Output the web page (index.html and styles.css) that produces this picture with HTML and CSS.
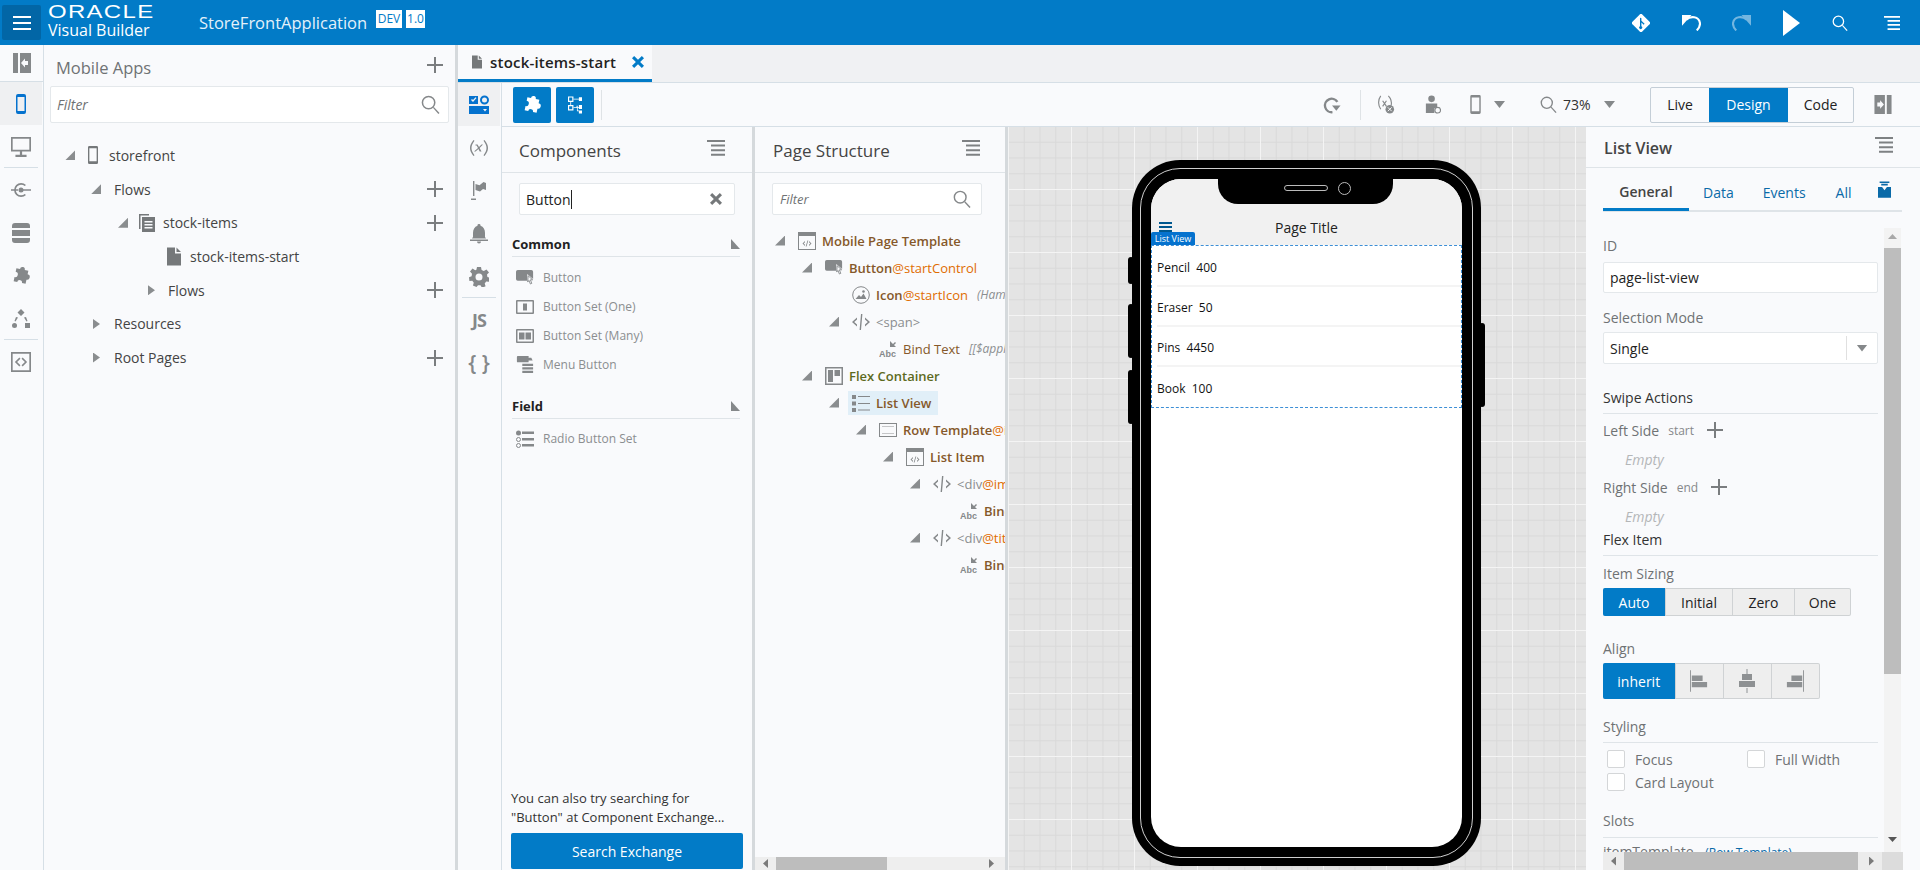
FILE: index.html
```html
<!DOCTYPE html>
<html lang="en">
<head>
  <meta charset="UTF-8" />
  <meta name="viewport" content="width=device-width, initial-scale=1" />
  <title>Oracle Visual Builder - StoreFrontApplication</title>
  <link rel="stylesheet" href="styles.css">
</head>
<body>
  <svg class="sprite" xmlns="http://www.w3.org/2000/svg">
    <symbol id="i-plus" viewBox="0 0 16 16"><path d="M7 0h2v7h7v2H9v7H7V9H0V7h7z"/></symbol>
    <symbol id="i-search" viewBox="0 0 20 20"><circle cx="8" cy="8" r="6.500" fill="none" stroke="currentColor" stroke-width="1.600"/><path d="M12.500 13.500l1-1 6 6.500-1.200 1z"/></symbol>
    <symbol id="i-list-menu" viewBox="0 0 18 16"><path d="M0 0h18v2H0zM4 4.600h14v2H4zM4 9.200h14v2H4zM4 13.800h14v2H4z"/></symbol>
    <symbol id="i-panel-l" viewBox="0 0 18 20"><path fill-rule="evenodd" d="M0 0h5v20H0zM7 0h11v20H7zM15 8h-3V5.500L8 10l4 4.500V12h3z"/></symbol>
    <symbol id="i-panel-r" viewBox="0 0 18 20"><path fill-rule="evenodd" d="M0 0h11v20H0zM3 8h3V5.500L10 10l-4 4.500V12H3zM13 0h5v20h-5z"/></symbol>
    <symbol id="i-mobile" viewBox="0 0 10 20"><path fill-rule="evenodd" d="M2 0h6a2 2 0 0 1 2 2v16a2 2 0 0 1-2 2H2a2 2 0 0 1-2-2V2a2 2 0 0 1 2-2zm-.5 3v14h7V3z"/></symbol>
    <symbol id="i-desktop" viewBox="0 0 18 18"><path fill-rule="evenodd" d="M0 0h18v13H0zm1.500 1.500v10h15v-10zM8 13h2v3H8zM4 16h10v2H4z"/></symbol>
    <symbol id="i-service" viewBox="0 0 20 20"><path d="M15 5a7 7 0 1 0 0 10l-1.300-1.100A5.300 5.300 0 1 1 13.700 6.100z"/><circle cx="10" cy="10" r="2.500"/><path d="M0 9.200h7v1.600H0zM12 9.200h8v1.600h-8z"/></symbol>
    <symbol id="i-db" viewBox="0 0 18 20"><path d="M3 0h12a3 3 0 0 1 3 3v2H0V3a3 3 0 0 1 3-3zM0 7h18v6H0zM0 15h18v2a3 3 0 0 1-3 3H3a3 3 0 0 1-3-3z"/></symbol>
    <symbol id="i-puzzle" viewBox="0 0 20 20"><path transform="rotate(12 10 10) translate(10 10) scale(1.220) translate(-10 -10)" d="M5 4.500h3a2 2 0 1 1 4 0h3v3a2 2 0 1 1 0 4.500v3.500h-3a2 2 0 1 0-4 0H5V12a2 2 0 1 0 0-4.500z"/></symbol>
    <symbol id="i-process" viewBox="0 0 18 20"><path d="M9 0l3.500 3.500L9 7 5.500 3.500zM4 8l2 .5-2.500 4-1-.6zM14 8l-2 .5 2.500 4 1-.6z"/><circle cx="2.500" cy="16.500" r="2.500"/><path d="M13 14h5v5h-5z"/></symbol>
    <symbol id="i-code-box" viewBox="0 0 18 18"><path fill-rule="evenodd" d="M0 0h18v18H0zm1.500 1.500v15h15v-15z"/><path d="M7.500 5L3.500 9l4 4 1-1-3-3 3-3zM10.500 5l4 4-4 4-1-1 3-3-3-3z"/></symbol>
    <symbol id="i-file" viewBox="0 0 14 18"><path d="M0 0h8v6h6v12H0zM9.500 0L14 4.500H9.500z"/></symbol>
    <symbol id="i-pages" viewBox="0 0 16 18"><path d="M0 0h10v1.500H1.500V15H0z"/><path fill-rule="evenodd" d="M3 3h13v15H3zm2.500 4v1.500h8V7zm0 3v1.500h8V10zm0 3v1.500h8V13z"/></symbol>
    <symbol id="i-palette" viewBox="0 0 20 20"><path fill-rule="evenodd" d="M0 1h9v8H0zm2 4l2 2 3.500-4-1-.8L4 5 3 4z"/><circle cx="15.500" cy="5" r="3.500" fill="none" stroke="currentColor" stroke-width="2"/><path fill-rule="evenodd" d="M0 11h20v8H0zm14 3l2 2.500 2-2.500z"/></symbol>
    <symbol id="i-vars" viewBox="0 0 20 20"><path d="M4.500 2C2 5 1 7.500 1 10s1 5 3.500 8l1-.7C3.500 14.500 2.500 12.500 2.500 10s1-4.500 3-7.300zM15.500 2l-1 .7c2 2.800 3 4.800 3 7.300s-1 4.500-3 7.300l1 .7c2.500-3 3.500-5.500 3.500-8s-1-5-3.500-8zM6.500 6.500h2l1.500 2.500 2.500-2.500H14L10.600 10l1.900 3.500h-1.800L9.500 11l-3 2.500H5L9 10 7.600 7.500h-1.100z"/></symbol>
    <symbol id="i-flag" viewBox="0 0 16 20"><path d="M2 0h1.400v15H2zM0 17.500h5V19H0zM4.500 3l4 1.200L12.500 1 15 2v7l-3-1-3 2.500L4.500 9z"/></symbol>
    <symbol id="i-bell" viewBox="0 0 18 20"><path d="M9 0a1.500 1.500 0 0 1 1.500 1.700C13.500 2.700 15 5.500 15 9v4l1 1.500H2L3 13V9c0-3.500 1.500-6.300 4.500-7.300A1.500 1.500 0 0 1 9 0zM0 15.500h18V17H0zM7 17.500h4a2 2 0 0 1-4 0z"/></symbol>
    <symbol id="i-gear" viewBox="0 0 20 20"><path fill-rule="evenodd" d="M8 0h4l.6 3 2.200 1 2.700-1.600 2.500 3-2 2.200.4 2.400 2.600 1-.9 3.800-2.900-.2-1.500 1.900.9 2.800-3.600 1.500-1.500-2.500h-2.500L7.500 20l-3.600-1.500.9-2.800-1.500-1.900-2.900.2L0 10.200l2.600-1L3 6.800 1 4.600l2.500-3L6.200 3.200 7.400 2.800zM10 6.500a3.500 3.500 0 1 0 0 7 3.500 3.500 0 0 0 0-7z"/></symbol>
    <symbol id="i-cursor-btn" viewBox="0 0 20 20"><path d="M2 1h15a2 2 0 0 1 2 2v8l-6.500-5.500V13H2a2 2 0 0 1-2-2V3a2 2 0 0 1 2-2z"/><path fill="none" stroke="currentColor" d="M13.500 7.500l5 4.500h-2.500l1.500 4-1.500.7-1.600-4-1.400 1.800z"/></symbol>
    <symbol id="i-btn-one" viewBox="0 0 18 14"><path fill-rule="evenodd" d="M1 0h16a1 1 0 0 1 1 1v12a1 1 0 0 1-1 1H1a1 1 0 0 1-1-1V1a1 1 0 0 1 1-1zm.5 1.500v11h15v-11z"/><path d="M7 3.500h4v7H7z"/></symbol>
    <symbol id="i-btn-many" viewBox="0 0 18 14"><path fill-rule="evenodd" d="M1 0h16a1 1 0 0 1 1 1v12a1 1 0 0 1-1 1H1a1 1 0 0 1-1-1V1a1 1 0 0 1 1-1zm.5 1.500v11h15v-11z"/><path d="M3 3.500h5.500v7H3zM9.500 3.500H15v7H9.500z"/></symbol>
    <symbol id="i-menu-btn" viewBox="0 0 18 20"><path d="M1 0h12v7H1a1 1 0 0 1-1-1V1a1 1 0 0 1 1-1zM13 2h3l1.500 3H13zM6 8.500h12V11H6zM6 12.500h12V15H6zM6 16.500h12V19H6z"/></symbol>
    <symbol id="i-radio" viewBox="0 0 18 18"><circle cx="2.500" cy="3" r="2.500"/><circle cx="2.500" cy="9.500" r="2" fill="none" stroke="currentColor"/><circle cx="2.500" cy="15.500" r="2" fill="none" stroke="currentColor"/><path d="M6 1.500h12v2.500H6zM6 8h12v2.500H6zM6 14h12v2.500H6z"/></symbol>
    <symbol id="i-template" viewBox="0 0 18 18"><path fill-rule="evenodd" d="M0 0h18v18H0zm1 4v13h16V4z"/><path d="M7 9l-2.500 2.500L7 14v-1.200L5.700 11.500 7 10.200zM11 9l2.500 2.500L11 14v-1.200l1.300-1.300L11 10.200zM9.500 8.500h.8l-1.800 6h-.8z"/></symbol>
    <symbol id="i-image" viewBox="0 0 18 18"><circle cx="9" cy="9" r="8.300" fill="none" stroke="currentColor" stroke-width="1"/><path d="M3.500 13l3.500-4 2 2 2.500-3.500 3 5.500z"/><circle cx="11.500" cy="5.500" r="1.300"/></symbol>
    <symbol id="i-tag" viewBox="0 0 18 18"><path d="M5 4.500L0 9l5 4.500v-2L2.200 9 5 6.500zM13 4.500L18 9l-5 4.500v-2L15.800 9 13 6.500zM9 1h1.400L9 17H7.600z"/></symbol>
    <symbol id="i-flex" viewBox="0 0 18 18"><path fill-rule="evenodd" d="M0 0h18v18H0zm1.500 1.500v15h15v-15z"/><path d="M3 3h5v12H3zM9.500 3h5.500v6H9.500z"/></symbol>
    <symbol id="i-listview" viewBox="0 0 18 18"><path d="M0 1h4v4H0zM0 7.500h4v4H0zM0 14h4v4H0zM6 2h12v1H6zM6 9h12v1H6zM6 15.500h12v1H6z"/></symbol>
    <symbol id="i-row" viewBox="0 0 18 14"><path fill-rule="evenodd" d="M0 0h18v14H0zm1 1v12h16V1z"/><path d="M3 3h12v.8H3zM3 10.200h12v.8H3z" opacity=".6"/></symbol>
    <symbol id="i-git" viewBox="0 0 18 18"><path fill-rule="evenodd" d="M7.500.7a2 2 0 0 1 3 0l6.800 6.800a2 2 0 0 1 0 3l-6.800 6.800a2 2 0 0 1-3 0L.7 10.500a2 2 0 0 1 0-3zM8 4.500v7.800a1.500 1.500 0 1 0 1.400 0V8.500l2.300 2.200.9-.9-3.200-3V4.500a.7.700 0 0 0-1.400 0z"/></symbol>
    <symbol id="i-undo" viewBox="0 0 18 16"><path d="M0 1h9L0 11z"/><path fill="none" stroke="currentColor" stroke-width="2" d="M4 5.500C8 1.500 16 2 17 8.500c.3 2.500-1.500 5.500-3 7"/></symbol>
    <symbol id="i-play" viewBox="0 0 17 26"><path d="M0 0l17 13L0 26z"/></symbol>
    <symbol id="i-refresh" viewBox="0 0 20 20"><path fill="none" stroke="currentColor" stroke-width="2.600" d="M16 6.500A7.500 7.500 0 1 0 10.500 18"/><path d="M10 10.500h9.500L14.800 16.500z"/></symbol>
    <symbol id="i-var-off" viewBox="0 0 20 20"><path fill="none" stroke="currentColor" stroke-width="1.200" d="M5 1C2 5 2 11 5 15M13 1c3 3 3.500 7 3 10M7 6l4 6M11 6l-4 6"/><circle cx="14.500" cy="15" r="4.500"/><path stroke="#f9fafc" d="M12.500 13l4 4M16.500 13l-4 4"/></symbol>
    <symbol id="i-user" viewBox="0 0 18 20"><circle cx="8" cy="4" r="3.500"/><path d="M2 9h12v4l-3 1v5H2z"/><circle cx="14.500" cy="16" r="3" fill="none" stroke="currentColor" stroke-width="1.200"/></symbol>
    <symbol id="i-device" viewBox="0 0 11 20"><path fill-rule="evenodd" d="M1.500 0h8A1.500 1.500 0 0 1 11 1.500v17A1.500 1.500 0 0 1 9.500 20h-8A1.500 1.500 0 0 1 0 18.500v-17A1.500 1.500 0 0 1 1.500 0zM1.500 2.500V17h8V2.500z"/></symbol>
    <symbol id="i-struct" viewBox="0 0 18 22"><path fill-rule="evenodd" d="M0 0h7v7H0zm1.500 1.500v4h4v-4zM0 11h7v7H0zm1.500 1.500v4h4v-4z"/><path d="M7 3h7V1h4v5h-4V4H7zM3 7h1v4H3zM7 14h4v-2h1.500v2H14v-3h4v5h-4v-1h-1.500v3H18v4h-4v-3h-2.500v-4H7z"/></symbol>
    <symbol id="i-pin" viewBox="0 0 16 20"><path d="M2 0h12v2H2zM4 3h8v2H4zM0 7h5l3 4 3-4h5v13H0z"/></symbol>
    <symbol id="i-close" viewBox="0 0 14 14"><path d="M2.500 0L7 4.500 11.500 0 14 2.500 9.500 7l4.500 4.500-2.500 2.500L7 9.500 2.500 14 0 11.500 4.500 7 0 2.500z"/></symbol>
    <symbol id="i-align-start" viewBox="0 0 20 24"><path d="M0 0h1v24H0zM2 6h12v6H2zM2 13h17v6H2z"/></symbol>
    <symbol id="i-align-center" viewBox="0 0 18 24"><path d="M8.500 0h1v5h-1zM4 5h10v6H4zM1 12h16v6H1zM8.500 19h1v5h-1z"/></symbol>
    <symbol id="i-align-end" viewBox="0 0 20 24"><path d="M19 0h1v24h-1zM6 6h12v6H6zM1 13h17v6H1z"/></symbol>
  </svg>

  <div class="app">
    <header class="topbar">
      <button class="menu-btn"><span></span><span></span><span></span></button>
      <div class="brand">
        <div class="brand-oracle">ORACLE</div>
        <div class="brand-product">Visual Builder</div>
      </div>
      <div class="app-name">StoreFrontApplication</div>
      <span class="badge badge-dev">DEV</span>
      <span class="badge badge-ver">1.0</span>
      <div class="top-actions">
        <svg class="ti"><use href="#i-git"/></svg>
        <svg class="ti ti-undo"><use href="#i-undo"/></svg>
        <svg class="ti ti-redo"><use href="#i-undo"/></svg>
        <svg class="ti ti-play"><use href="#i-play"/></svg>
        <svg class="ti ti-search"><use href="#i-search"/></svg>
        <svg class="ti ti-menu"><use href="#i-list-menu"/></svg>
      </div>
    </header>

    <div class="workspace">
      <nav class="rail">
        <div class="rail-top"><svg class="ri"><use href="#i-panel-l"/></svg></div>
        <div class="rail-item active"><svg class="ri ri-blue"><use href="#i-mobile"/></svg></div>
        <div class="rail-item sep"><svg class="ri"><use href="#i-desktop"/></svg></div>
        <div class="rail-item"><svg class="ri"><use href="#i-service"/></svg></div>
        <div class="rail-item"><svg class="ri"><use href="#i-db"/></svg></div>
        <div class="rail-item"><svg class="ri"><use href="#i-puzzle"/></svg></div>
        <div class="rail-item sep"><svg class="ri"><use href="#i-process"/></svg></div>
        <div class="rail-item"><svg class="ri"><use href="#i-code-box"/></svg></div>
      </nav>

      <section class="nav-panel">
        <div class="nav-head">
          <span>Mobile Apps</span>
          <svg class="plus"><use href="#i-plus"/></svg>
        </div>
        <div class="filter nav-filter">
          <span class="filter-text">Filter</span>
          <svg class="filter-icon"><use href="#i-search"/></svg>
        </div>
        <div class="nav-tree">
          <div class="nav-row n0"><i class="twist open"></i><svg class="ni ni-mobile"><use href="#i-device"/></svg>storefront</div>
          <div class="nav-row n1"><i class="twist open"></i>Flows<svg class="plus"><use href="#i-plus"/></svg></div>
          <div class="nav-row n2"><i class="twist open"></i><svg class="ni ni-pages"><use href="#i-pages"/></svg>stock-items<svg class="plus"><use href="#i-plus"/></svg></div>
          <div class="nav-row n3"><svg class="ni ni-file"><use href="#i-file"/></svg>stock-items-start</div>
          <div class="nav-row n4"><i class="twist shut"></i>Flows<svg class="plus"><use href="#i-plus"/></svg></div>
          <div class="nav-row n1"><i class="twist shut"></i>Resources</div>
          <div class="nav-row n1"><i class="twist shut"></i>Root Pages<svg class="plus"><use href="#i-plus"/></svg></div>
        </div>
      </section>

      <div class="editor">
        <div class="tabbar">
          <div class="tab">
            <svg class="tab-file"><use href="#i-file"/></svg>
            <span class="tab-name">stock-items-start</span>
            <svg class="tab-close"><use href="#i-close"/></svg>
          </div>
        </div>

        <div class="editor-body">
          <nav class="rail rail-tools">
            <div class="rail-item active"><svg class="ri ri-blue"><use href="#i-palette"/></svg></div>
            <div class="rail-item"><svg class="ri"><use href="#i-vars"/></svg></div>
            <div class="rail-item"><svg class="ri"><use href="#i-flag"/></svg></div>
            <div class="rail-item"><svg class="ri"><use href="#i-bell"/></svg></div>
            <div class="rail-item sep"><svg class="ri"><use href="#i-gear"/></svg></div>
            <div class="rail-item rail-glyph rail-js">JS</div>
            <div class="rail-item rail-glyph rail-braces">{ }</div>
          </nav>

          <div class="designer">
            <div class="toolbar">
              <button class="tool-btn"><svg><use href="#i-puzzle"/></svg></button>
              <button class="tool-btn"><svg class="tool-struct"><use href="#i-struct"/></svg></button>
              <span class="tool-div"></span>
              <div class="toolbar-right">
                <svg class="tb tb-refresh"><use href="#i-refresh"/></svg>
                <span class="tool-div tool-div-right"></span>
                <svg class="tb tb-var"><use href="#i-var-off"/></svg>
                <svg class="tb tb-user"><use href="#i-user"/></svg>
                <svg class="tb tb-device"><use href="#i-device"/></svg>
                <i class="caret tb-caret"></i>
                <svg class="tb tb-zoom"><use href="#i-search"/></svg>
                <span class="zoom-val">73%</span>
                <i class="caret zoom-caret"></i>
                <div class="modes">
                  <span class="mode mode-live">Live</span>
                  <span class="mode mode-design on">Design</span>
                  <span class="mode mode-code">Code</span>
                </div>
                <svg class="tb tb-panel"><use href="#i-panel-r"/></svg>
              </div>
            </div>

            <div class="designer-body">
              <section class="palette">
                <div class="panel-head">
                  <span>Components</span>
                  <svg class="panel-menu"><use href="#i-list-menu"/></svg>
                </div>
                <div class="filter palette-search">
                  <span class="search-value">Button</span>
                  <svg class="search-clear"><use href="#i-close"/></svg>
                </div>
                <div class="group group-first"><span>Common</span><i class="group-arrow"></i></div>
                <div class="comp"><svg class="ci"><use href="#i-cursor-btn"/></svg>Button</div>
                <div class="comp"><svg class="ci"><use href="#i-btn-one"/></svg>Button Set (One)</div>
                <div class="comp"><svg class="ci"><use href="#i-btn-many"/></svg>Button Set (Many)</div>
                <div class="comp"><svg class="ci"><use href="#i-menu-btn"/></svg>Menu Button</div>
                <div class="group group-second"><span>Field</span><i class="group-arrow"></i></div>
                <div class="comp"><svg class="ci"><use href="#i-radio"/></svg>Radio Button Set</div>
                <div class="palette-foot">
                  <p class="exchange-note">You can also try searching for<br>"Button" at Component Exchange...</p>
                  <button class="exchange-btn">Search Exchange</button>
                </div>
              </section>

              <section class="structure">
                <div class="panel-head">
                  <span>Page Structure</span>
                  <svg class="panel-menu"><use href="#i-list-menu"/></svg>
                </div>
                <div class="filter structure-filter">
                  <span class="filter-text">Filter</span>
                  <svg class="filter-icon"><use href="#i-search"/></svg>
                </div>
                <div class="st-tree">
                  <div class="st-row l0"><i class="twist open"></i><svg class="si"><use href="#i-template"/></svg><b>Mobile Page Template</b></div>
                  <div class="st-row l1"><i class="twist open"></i><svg class="si"><use href="#i-cursor-btn"/></svg><b>Button</b><em>@startControl</em></div>
                  <div class="st-row l2"><i class="twist none"></i><svg class="si"><use href="#i-image"/></svg><b>Icon</b><em>@startIcon</em><small>(Hamburger)</small></div>
                  <div class="st-row l2"><i class="twist open"></i><svg class="si"><use href="#i-tag"/></svg><span class="st-tag">&lt;span&gt;</span></div>
                  <div class="st-row l3"><i class="twist none"></i><svg class="si si-abc" viewBox="0 0 18 18"><path d="M11 1l3 3 2-2 1 1-2 2 2 2h-6z"/><text x="0" y="17" class="abc">Abc</text></svg><span class="st-plain">Bind Text</span><small>[[$application]]</small></div>
                  <div class="st-row l1"><i class="twist open"></i><svg class="si"><use href="#i-flex"/></svg><b class="olive">Flex Container</b></div>
                  <div class="st-row l2"><i class="twist open"></i><span class="st-selected"><svg class="si"><use href="#i-listview"/></svg><b>List View</b></span></div>
                  <div class="st-row l3"><i class="twist open"></i><svg class="si"><use href="#i-row"/></svg><b>Row Template</b><em>@itemTemplate</em></div>
                  <div class="st-row l4"><i class="twist open"></i><svg class="si"><use href="#i-template"/></svg><b>List Item</b></div>
                  <div class="st-row l5"><i class="twist open"></i><svg class="si"><use href="#i-tag"/></svg><span class="st-tag">&lt;div</span><em>@image</em></div>
                  <div class="st-row l6"><i class="twist none"></i><svg class="si si-abc" viewBox="0 0 18 18"><path d="M11 1l3 3 2-2 1 1-2 2 2 2h-6z"/><text x="0" y="17" class="abc">Abc</text></svg><b>Bind Text</b></div>
                  <div class="st-row l5"><i class="twist open"></i><svg class="si"><use href="#i-tag"/></svg><span class="st-tag">&lt;div</span><em>@title</em></div>
                  <div class="st-row l6"><i class="twist none"></i><svg class="si si-abc" viewBox="0 0 18 18"><path d="M11 1l3 3 2-2 1 1-2 2 2 2h-6z"/><text x="0" y="17" class="abc">Abc</text></svg><b>Bind Text</b></div>
                </div>
                <div class="hscroll st-hscroll"><i class="arrow-l"></i><span class="thumb"></span><i class="arrow-r"></i></div>
              </section>

              <section class="canvas">
                <div class="phone">
                  <i class="side-btn side-l1"></i>
                  <i class="side-btn side-l2"></i>
                  <i class="side-btn side-l3"></i>
                  <i class="side-btn side-r"></i>
                  <div class="phone-line"></div>
                  <div class="screen">
                    <div class="notch"><span class="speaker"></span><span class="camera"></span></div>
                    <div class="page-bar">
                      <div class="page-burger"><span></span><span></span><span></span></div>
                      <div class="page-title">Page Title</div>
                    </div>
                    <div class="list-view">
                      <div class="list-tag">List View</div>
                      <div class="list-row">Pencil&nbsp; 400</div>
                      <div class="list-row">Eraser&nbsp; 50</div>
                      <div class="list-row">Pins&nbsp; 4450</div>
                      <div class="list-row">Book&nbsp; 100</div>
                    </div>
                  </div>
                </div>
              </section>

              <aside class="props">
                <div class="props-head">
                  <span>List View</span>
                  <svg class="panel-menu"><use href="#i-list-menu"/></svg>
                </div>
                <div class="props-tabs">
                  <span class="ptab ptab-general">General</span>
                  <span class="ptab ptab-data">Data</span>
                  <span class="ptab ptab-events">Events</span>
                  <span class="ptab ptab-all">All</span>
                  <svg class="ptab-pin"><use href="#i-pin"/></svg>
                </div>
                <div class="props-body">
                  <div class="props-form">
                    <label class="lbl lbl-id">ID</label>
                    <div class="input input-id">page-list-view</div>
                    <label class="lbl lbl-sel">Selection Mode</label>
                    <div class="input input-sel">Single<span class="sel-btn"><i class="caret"></i></span></div>

                    <div class="sec sec-swipe">Swipe Actions</div>
                    <div class="side-row side-left">Left Side <small>start</small><svg class="plus plus-form"><use href="#i-plus"/></svg></div>
                    <div class="empty empty-1">Empty</div>
                    <div class="side-row side-right">Right Side <small>end</small><svg class="plus plus-form"><use href="#i-plus"/></svg></div>
                    <div class="empty empty-2">Empty</div>

                    <div class="sec sec-flex">Flex Item</div>
                    <label class="lbl lbl-sizing">Item Sizing</label>
                    <div class="btnset btnset-sizing">
                      <span class="seg seg-auto on">Auto</span>
                      <span class="seg seg-initial">Initial</span>
                      <span class="seg seg-zero">Zero</span>
                      <span class="seg seg-one">One</span>
                    </div>
                    <label class="lbl lbl-align">Align</label>
                    <div class="btnset btnset-align">
                      <span class="seg seg-inherit on">inherit</span>
                      <span class="seg seg-ic"><svg class="al-icon"><use href="#i-align-start"/></svg></span>
                      <span class="seg seg-ic"><svg class="al-icon"><use href="#i-align-center"/></svg></span>
                      <span class="seg seg-ic"><svg class="al-icon"><use href="#i-align-end"/></svg></span>
                    </div>

                    <div class="sec sec-styling">Styling</div>
                    <div class="checks">
                      <div class="check"><i></i>Focus</div>
                      <div class="check"><i></i>Full Width</div>
                      <div class="check"><i></i>Card Layout</div>
                    </div>

                    <div class="sec sec-slots">Slots</div>
                    <div class="slot-row">itemTemplate <a>(Row Template)</a></div>
                  </div>
                  <div class="vscroll"><i class="arrow-u"></i><span class="vthumb"></span><i class="arrow-d"></i></div>
                </div>
                <div class="hscroll pr-hscroll"><i class="arrow-l"></i><span class="thumb"></span><i class="arrow-r"></i><span class="corner"></span></div>
              </aside>
            </div>
          </div>
        </div>
      </div>
    </div>
  </div>
</body>
</html>
```

FILE: styles.css
```css
* {
  box-sizing: border-box;
}
html, body {
  margin: 0;
  height: 100%;
  overflow: hidden;
}
body {
  font-family: 'Open Sans', 'Noto Sans', sans-serif;
  font-size: 14px;
  color: #2d2d2d;
  background: #f9fafc;
}
button {
  font-family: inherit;
  border: 0;
  padding: 0;
}
svg {
  fill: currentColor;
  display: block;
  flex: none;
}
.sprite {
  position: absolute;
  width: 0;
  height: 0;
}
.app {
  width: 1920px;
  height: 870px;
  display: flex;
  flex-direction: column;
}

/* top bar */
.topbar {
  height: 45px;
  flex: none;
  background: #027bc7;
  color: #fff;
  display: flex;
  align-items: center;
  padding-left: 2px;
}
.menu-btn {
  width: 39px;
  height: 35px;
  background: #0266a6;
  border-radius: 2px;
  display: flex;
  flex-direction: column;
  justify-content: center;
  align-items: center;
  gap: 4px;
}
.menu-btn span {
  width: 18px;
  height: 2px;
  background: #fff;
}
.brand {
  margin-left: 7px;
  width: 151px;
  height: 45px;
}
.brand-oracle {
  font-family: 'Liberation Sans', sans-serif;
  font-size: 18px;
  line-height: 14px;
  letter-spacing: 1px;
  margin-top: 5px;
  transform: scaleX(1.330);
  transform-origin: left;
}
.brand-product {
  font-size: 16px;
  line-height: 18px;
  margin-top: 2px;
}
.app-name {
  font-size: 16.500px;
  width: 177px;
  color: #e4f1fa;
}
.badge {
  background: #fff;
  color: #027bc7;
  font-size: 12px;
  height: 18px;
  line-height: 18px;
  text-align: center;
  margin-top: -7px;
}
.badge-dev {
  width: 26px;
}
.badge-ver {
  width: 19px;
  margin-left: 4px;
}
.top-actions {
  margin-left: auto;
  display: flex;
  align-items: center;
  padding-right: 20px;
}
.ti {
  width: 18px;
  height: 18px;
}
.ti-undo {
  width: 19px;
  height: 17px;
  margin-left: 32px;
}
.ti-redo {
  width: 19px;
  height: 17px;
  margin-left: 31px;
  transform: scaleX(-1);
  opacity: .45;
}
.ti-play {
  width: 17px;
  height: 26px;
  margin-left: 32px;
}
.ti-search {
  width: 16px;
  height: 16px;
  margin-left: 32px;
}
.ti-menu {
  width: 16px;
  height: 16px;
  margin-left: 36px;
}

.workspace {
  flex: 1;
  display: flex;
  min-height: 0;
}

/* icon rails */
.rail {
  width: 44px;
  flex: none;
  border-right: 1px solid #d6dfe6;
  padding-right: 1px;
  color: #85888a;
}
.rail-top {
  height: 37px;
  display: flex;
  align-items: center;
  justify-content: center;
  border-bottom: 1px solid #d6dfe6;
  margin-right: -1px;
}
.rail-item {
  height: 43px;
  display: flex;
  align-items: center;
  justify-content: center;
  position: relative;
}
.rail-item.active {
  background: #eff0f2;
}
.rail-item.sep::after {
  content: "";
  position: absolute;
  left: 4px;
  right: 4px;
  bottom: 0;
  height: 1px;
  background: #d6dfe6;
}
.ri {
  width: 20px;
  height: 20px;
}
.ri-blue {
  color: #0572ce;
}
.rail-tools {
  height: 100%;
}
.rail-glyph {
  font-weight: 700;
  font-size: 18px;
}
.rail-js {
  font-size: 18px;
  letter-spacing: -1px;
}
.rail-braces {
  font-weight: 600;
  font-size: 21px;
}

/* left navigator */
.nav-panel {
  width: 414px;
  flex: none;
  border-right: 3px solid #d5d9dc;
}
.nav-head {
  height: 41px;
  display: flex;
  align-items: center;
  justify-content: space-between;
  padding: 4px 12px 0 12px;
  font-size: 16.500px;
  color: #6f7274;
}
.plus {
  width: 16px;
  height: 16px;
  color: #7a7d7f;
  margin-left: auto;
}
.nav-head .plus {
  margin-top: -6px;
}
.filter {
  background: #fff;
  border: 1px solid #e4e8eb;
  border-radius: 2px;
  display: flex;
  align-items: center;
}
.nav-filter {
  margin-left: 6px;
  width: 399px;
  height: 37px;
  padding: 0 8px 0 6px;
}
.filter-text {
  font-style: italic;
  color: #6f7274;
  font-size: 14px;
}
.filter-icon {
  width: 19px;
  height: 19px;
  margin-left: auto;
  color: #85888a;
}
.nav-tree {
  margin-top: 15.600px;
}
.nav-row {
  height: 33.700px;
  display: flex;
  align-items: center;
  padding-right: 12px;
  font-size: 14px;
  color: #444;
}
.twist {
  display: block;
  flex: none;
  width: 10px;
  height: 10px;
  background: #8a8d8f;
  margin-right: 13px;
}
.twist.open {
  clip-path: polygon(100% 0, 100% 100%, 0 100%);
}
.twist.shut {
  clip-path: polygon(0 0, 70% 50%, 0 100%);
}
.twist.none {
  visibility: hidden;
}
.n0 {
  padding-left: 21px;
}
.n1 {
  padding-left: 47px;
}
.n2 {
  padding-left: 74px;
}
.n3 {
  padding-left: 123px;
}
.n4 {
  padding-left: 104px;
}
.n4 .twist {
  margin-right: 10px;
}
.n1 .twist.shut {
  margin-left: 2px;
  margin-right: 11px;
}
.ni {
  color: #75787a;
}
.ni-mobile {
  width: 10px;
  height: 20px;
  margin-right: 11px;
}
.n2 .twist {
  margin-right: 11px;
}
.ni-pages {
  width: 16px;
  height: 18px;
  margin-right: 8px;
}
.ni-file {
  width: 14px;
  height: 19px;
  margin-right: 9px;
}

/* editor tabs */
.editor {
  flex: 1;
  min-width: 0;
  display: flex;
  flex-direction: column;
}
.tabbar {
  height: 38px;
  flex: none;
  background: #f0f1f3;
  border-bottom: 1px solid #d6dfe6;
}
.tab {
  width: 194px;
  height: 37px;
  background: #f9fafc;
  border-bottom: 3px solid #027bc7;
  display: flex;
  align-items: center;
  padding-left: 14px;
}
.tab-file {
  width: 10px;
  height: 14px;
  color: #75787a;
}
.tab-name {
  font-weight: 600;
  font-size: 15px;
  letter-spacing: .2px;
  color: #222;
  margin-left: 8px;
}
.tab-close {
  width: 12px;
  height: 12px;
  color: #027bc7;
  margin-left: auto;
  margin-right: 8px;
}
.editor-body {
  flex: 1;
  display: flex;
  min-height: 0;
}
.designer {
  flex: 1;
  min-width: 0;
  display: flex;
  flex-direction: column;
}

/* designer toolbar */
.toolbar {
  height: 44px;
  flex: none;
  display: flex;
  align-items: center;
  padding: 0 0 0 11px;
  border-bottom: 1px solid #d6dfe6;
}
.tool-btn {
  width: 38px;
  height: 36px;
  background: #027bc7;
  border-radius: 2px;
  color: #fff;
  display: flex;
  align-items: center;
  justify-content: center;
  margin-right: 5px;
}
.tool-btn svg {
  width: 20px;
  height: 20px;
}
.tool-btn .tool-struct {
  width: 14px;
  height: 18px;
}
.tool-div {
  width: 1px;
  height: 30px;
  background: #dfe3e6;
  margin-left: 2px;
}
.toolbar-right {
  margin-left: auto;
  display: flex;
  align-items: center;
  color: #85888a;
}
.tb-refresh {
  width: 18px;
  height: 18px;
}
.tool-div-right {
  margin-left: 19px;
}
.tb-var {
  width: 19px;
  height: 19px;
  margin-left: 15px;
}
.tb-user {
  width: 17px;
  height: 19px;
  margin-left: 29px;
}
.tb-device {
  width: 11px;
  height: 19px;
  margin-left: 29px;
}
.caret {
  display: block;
  width: 11px;
  height: 7px;
  background: #85888a;
  clip-path: polygon(0 0, 100% 0, 50% 100%);
}
.tb-caret {
  margin-left: 13px;
}
.tb-zoom {
  width: 17px;
  height: 17px;
  margin-left: 35px;
}
.zoom-val {
  font-size: 14px;
  color: #333;
  margin-left: 6px;
  width: 36px;
}
.zoom-caret {
  margin-left: 5px;
}
.modes {
  display: flex;
  width: 204px;
  height: 36px;
  margin-left: 35px;
  border: 1px solid #c4ced7;
  border-radius: 2px;
  color: #222;
  font-size: 14px;
}
.mode {
  display: flex;
  align-items: center;
  justify-content: center;
}
.mode-live {
  width: 58px;
}
.mode-design {
  width: 79px;
}
.mode-code {
  flex: 1;
}
.mode.on {
  background: #027bc7;
  color: #fff;
}
.tb-panel {
  width: 18px;
  height: 19px;
  margin-left: 20px;
  margin-right: 28px;
}

.designer-body {
  flex: 1;
  display: flex;
  min-height: 0;
}

/* palette + structure panels */
.palette, .structure {
  flex: none;
  display: flex;
  flex-direction: column;
  position: relative;
}
.palette {
  width: 253px;
  border-right: 3px solid #d5d9dc;
}
.structure {
  width: 250px;
  overflow: hidden;
}
.panel-head {
  height: 46px;
  flex: none;
  display: flex;
  align-items: center;
  padding: 2px 27px 0 17px;
  border-bottom: 1px solid #dfe4e8;
  font-size: 17px;
  color: #444;
}
.structure .panel-head {
  padding-left: 18px;
  padding-right: 25px;
}
.panel-menu {
  width: 18px;
  height: 16px;
  color: #7e8183;
  margin-left: auto;
  margin-top: -6px;
}
.palette-search {
  margin: 10px 0 0 17px;
  width: 216px;
  height: 32px;
  padding: 0 12px 0 6px;
  flex: none;
}
.search-value {
  color: #222;
  border-right: 1px solid #222;
  font-size: 14px;
  line-height: 19px;
  padding-right: 0;
}
.search-clear {
  width: 12px;
  height: 12px;
  margin-left: auto;
  color: #75787a;
}
.group {
  margin-left: 10px;
  width: 228px;
  height: 25px;
  flex: none;
  border-bottom: 1px solid #dfe4e8;
  display: flex;
  align-items: center;
  justify-content: space-between;
  font-weight: 700;
  font-size: 13px;
  color: #222;
}
.group-first {
  margin-top: 17px;
}
.group-second {
  margin-top: 15px;
}
.group-arrow {
  display: block;
  width: 9px;
  height: 10px;
  background: #85888a;
  clip-path: polygon(0 0, 100% 100%, 0 100%);
}
.comp {
  height: 29px;
  flex: none;
  display: flex;
  align-items: center;
  padding-left: 14px;
  font-size: 12px;
  color: #8b8e90;
}
.group-first + .comp {
  margin-top: 6px;
}
.group-second + .comp {
  margin-top: 5px;
}
.ci {
  width: 18px;
  height: 18px;
  margin-right: 9px;
  color: #85888a;
}
.palette-foot {
  margin-top: auto;
  padding-left: 9px;
}
.exchange-note {
  margin: 0;
  font-size: 13px;
  line-height: 19px;
  color: #333;
  white-space: nowrap;
}
.exchange-btn {
  display: block;
  width: 232px;
  height: 36px;
  margin: 6px 0 1px;
  background: #027bc7;
  color: #fff;
  font-size: 14px;
  border-radius: 2px;
}

.structure-filter {
  margin: 10px 0 0 17px;
  width: 210px;
  height: 32px;
  padding: 0 10px 0 7px;
  flex: none;
}
.structure-filter .filter-text {
  font-size: 13px;
}
.structure-filter .filter-icon {
  width: 18px;
  height: 18px;
}
.st-tree {
  margin-top: 12px;
  flex: 1;
  font-size: 13px;
}
.st-row {
  height: 27px;
  display: flex;
  align-items: center;
  white-space: nowrap;
}
.l0 {
  padding-left: 20px;
}
.l1 {
  padding-left: 47px;
}
.l2 {
  padding-left: 74px;
}
.l3 {
  padding-left: 101px;
}
.l4 {
  padding-left: 128px;
}
.l5 {
  padding-left: 155px;
}
.l6 {
  padding-left: 182px;
}
.si {
  width: 18px;
  height: 18px;
  margin-right: 6px;
  color: #85888a;
}
.abc {
  font-family: 'Liberation Sans', sans-serif;
  font-size: 9px;
  font-weight: 700;
}
.st-row b {
  font-weight: 600;
  color: #85582a;
}
.st-row b.olive {
  color: #5d6a1e;
}
.st-row em {
  font-style: normal;
  color: #e06c00;
}
.st-row small {
  font-size: 12px;
  font-style: italic;
  color: #8b8e90;
  margin-left: 9px;
}
.st-tag {
  color: #8b8e90;
}
.st-plain {
  color: #85582a;
}
.st-selected {
  display: flex;
  align-items: center;
  height: 24px;
  background: #e1eff8;
  width: 90px;
  margin-left: -4px;
  padding-left: 4px;
}

/* scrollbars */
.hscroll {
  flex: none;
  display: flex;
  align-items: center;
  background: #eeeeee;
  height: 13px;
}
.thumb {
  display: block;
  height: 100%;
  background: #bdbdbd;
}
.arrow-l, .arrow-r, .arrow-u, .arrow-d {
  display: block;
  flex: none;
  background: #7a7a7a;
}
.arrow-l, .arrow-r {
  width: 5px;
  height: 9px;
}
.arrow-l {
  clip-path: polygon(100% 0, 100% 100%, 0 50%);
  margin-left: 8px;
}
.arrow-r {
  clip-path: polygon(0 0, 100% 50%, 0 100%);
}
.st-hscroll .thumb {
  width: 111px;
  margin-left: 8px;
}
.st-hscroll .arrow-r {
  margin-left: 102px;
}

/* canvas + phone */
.canvas {
  width: 581px;
  flex: none;
  border-left: 3px solid #d5d9dc;
  background-color: #e4e4e4;
  background-image:
    linear-gradient(to right, #f4f4f4 1px, transparent 1px),
    linear-gradient(to bottom, #f4f4f4 1px, transparent 1px),
    linear-gradient(to right, #d9d9d9 1px, transparent 1px),
    linear-gradient(to bottom, #d9d9d9 1px, transparent 1px);
  background-size: 63px 63px, 63px 63px, 15.750px 15.750px, 15.750px 15.750px;
  background-position: 0 -1px, 0 -1px, 0 -1px, 0 -1px;
  overflow: hidden;
  padding: 33px 0 0 124px;
}
.phone {
  position: relative;
  width: 349px;
  height: 706px;
  background: #000;
  border-radius: 48px;
  padding: 19px;
}
.phone-line {
  position: absolute;
  left: 8px;
  right: 8px;
  top: 8px;
  bottom: 8px;
  border: 1px solid #cfcfcf;
  border-radius: 40px;
}
.side-btn {
  position: absolute;
  display: block;
  background: #000;
  border-radius: 3px;
  width: 6px;
}
.side-l1 {
  left: -4px;
  top: 97px;
  height: 27px;
}
.side-l2 {
  left: -4px;
  top: 144px;
  height: 54px;
}
.side-l3 {
  left: -4px;
  top: 210px;
  height: 54px;
}
.side-r {
  right: -4px;
  top: 163px;
  height: 84px;
}
.screen {
  position: relative;
  width: 311px;
  height: 668px;
  background: #fff;
  border-radius: 30px;
  overflow: hidden;
}
.notch {
  position: absolute;
  z-index: 2;
  left: 67px;
  top: 0;
  width: 175px;
  height: 25px;
  background: #000;
  border-radius: 0 0 20px 20px;
  display: flex;
  align-items: flex-start;
  padding: 6px 0 0 66px;
}
.speaker {
  width: 44px;
  height: 6px;
  border: 1px solid #bbb;
  border-radius: 3px;
}
.camera {
  width: 13px;
  height: 13px;
  border: 1px solid #bbb;
  border-radius: 50%;
  margin: -3px 0 0 10px;
}
.page-bar {
  height: 66px;
  background: #f1f1f1;
  position: relative;
  padding-top: 37px;
}
.page-burger {
  position: absolute;
  left: 8px;
  top: 43px;
  width: 13px;
}
.page-burger span {
  display: block;
  height: 2px;
  margin-bottom: 2px;
  background: #00588f;
}
.page-title {
  text-align: center;
  font-size: 14px;
  line-height: 24px;
  color: #222;
}
.list-view {
  position: relative;
  height: 163px;
  border: 1px dashed #3d8fd6;
  padding: 1px 0 0 5px;
}
.list-tag {
  position: absolute;
  left: -1px;
  top: -14px;
  width: 44px;
  height: 13px;
  background: #0572ce;
  color: #fff;
  font-size: 9px;
  line-height: 14px;
  text-align: center;
  border-radius: 2px 2px 0 0;
}
.list-row {
  height: 40px;
  display: flex;
  align-items: center;
  padding-top: 2px;
  font-size: 12px;
  color: #111;
  border-bottom: 2px solid #f4f4f4;
}
.list-row:last-child {
  border-bottom: 0;
}

/* property inspector */
.props {
  flex: 1;
  min-width: 0;
  display: flex;
  flex-direction: column;
  min-height: 0;
}
.props-head {
  height: 41px;
  flex: none;
  display: flex;
  align-items: center;
  padding: 2px 27px 0 18px;
  font-size: 16px;
  font-weight: 600;
  color: #444;
  border-bottom: 1px solid #dfe4e8;
}
.props-tabs {
  height: 44px;
  flex: none;
  margin: 0 18px 0 17px;
  border-bottom: 2px solid #dfe4e8;
  display: flex;
  align-items: center;
  position: relative;
  font-size: 14px;
  color: #0a6aa8;
}
.ptab-general {
  width: 86px;
  height: 44px;
  line-height: 50px;
  text-align: center;
  font-weight: 600;
  color: #444;
  border-bottom: 3px solid #027bc7;
}
.ptab-data {
  margin: 6px 0 0 14px;
}
.ptab-events {
  margin: 6px 0 0 29px;
}
.ptab-all {
  margin: 6px 0 0 30px;
}
.ptab-pin {
  width: 13px;
  height: 17px;
  margin-left: auto;
  margin-right: 11px;
}
.props-body {
  flex: 1;
  min-height: 0;
  display: flex;
}
.props-form {
  width: 298px;
  flex: none;
  padding-left: 17px;
  padding-right: 6px;
  overflow: hidden;
  font-size: 14px;
  color: #6f7274;
}
.lbl {
  display: block;
  height: 20px;
  line-height: 20px;
}
.lbl-id {
  margin-top: 24px;
}
.lbl-sel {
  margin-top: 15px;
}
.input {
  background: #fff;
  border: 1px solid #e4e8eb;
  border-radius: 2px;
  color: #222;
  display: flex;
  align-items: center;
  padding-left: 6px;
}
.input-id {
  margin-top: 6px;
  height: 31px;
}
.input-sel {
  margin-top: 4px;
  height: 32px;
  position: relative;
}
.sel-btn {
  position: absolute;
  right: 0;
  top: 3px;
  bottom: 3px;
  width: 31px;
  border-left: 1px solid #e0e0e0;
  display: flex;
  align-items: center;
  justify-content: center;
}
.sec {
  height: 26px;
  line-height: 20px;
  color: #333;
  border-bottom: 1px solid #dfe4e8;
}
.sec-swipe {
  margin-top: 24px;
}
.sec-flex {
  margin-top: 3px;
}
.sec-styling {
  margin-top: 18px;
  color: #6f7274;
}
.sec-slots {
  margin-top: 19px;
  height: 27px;
  color: #6f7274;
}
.side-row {
  height: 20px;
  display: flex;
  align-items: center;
}
.side-row small {
  font-size: 12px;
  margin-left: 9px;
  color: #85888a;
}
.plus-form {
  margin-left: 13px;
}
.side-left {
  margin-top: 6px;
}
.side-right {
  margin-top: 7px;
}
.empty {
  height: 20px;
  line-height: 20px;
  font-style: italic;
  color: #b4b6b8;
  padding-left: 22px;
  margin-top: 10px;
}
.lbl-sizing {
  margin-top: 8px;
}
.btnset {
  display: flex;
  margin-top: 4px;
  color: #222;
  background: #eeeeee;
  border: 1px solid #cfd2d4;
  border-left: 0;
  border-radius: 2px;
}
.btnset-sizing {
  width: 248px;
  height: 28px;
}
.btnset-align {
  width: 217px;
  height: 36px;
}
.seg {
  display: flex;
  align-items: center;
  justify-content: center;
  border-left: 1px solid #cfd2d4;
}
.seg.on {
  background: #027bc7;
  color: #fff;
  border-left: 0;
  margin: -1px 0;
  border-radius: 2px 0 0 2px;
}
.seg-auto {
  width: 62px;
}
.seg-initial {
  width: 67px;
}
.seg-zero {
  width: 62px;
}
.seg-one {
  flex: 1;
}
.seg-inherit {
  width: 72px;
}
.seg-ic {
  width: 48.500px;
  color: #8e9193;
}
.al-icon {
  width: 18px;
  height: 24px;
}
.lbl-align {
  margin-top: 23px;
}
.checks {
  display: grid;
  grid-template-columns: 140px 1fr;
  row-gap: 3px;
  margin-top: 6px;
}
.check {
  display: flex;
  align-items: center;
  height: 20px;
  padding-left: 4px;
}
.check i {
  display: block;
  width: 18px;
  height: 18px;
  background: #fff;
  border: 1px solid #d4d6d8;
  border-radius: 2px;
  margin-right: 10px;
}
.slot-row {
  margin-top: 4px;
  white-space: nowrap;
  line-height: 20px;
}
.slot-row a {
  color: #0a6aa8;
  font-size: 12px;
  margin-left: 8px;
}
.vscroll {
  width: 17px;
  flex: none;
  margin-top: 16px;
  background: #f3f3f3;
  display: flex;
  flex-direction: column;
  align-items: center;
  position: relative;
}
.vthumb {
  display: block;
  width: 17px;
  height: 426px;
  margin-top: 20px;
  background: #bdbdbd;
}
.arrow-u, .arrow-d {
  position: absolute;
  width: 9px;
  height: 5px;
}
.arrow-u {
  top: 6px;
  clip-path: polygon(50% 0, 100% 100%, 0 100%);
  background: #a8a8a8;
}
.arrow-d {
  bottom: 10px;
  clip-path: polygon(0 0, 100% 0, 50% 100%);
  background: #555;
}
.pr-hscroll {
  height: 18px;
  margin: 0 17px;
  background: #ececec;
  position: relative;
  padding-right: 21px;
}
.pr-hscroll .thumb {
  width: 234px;
  margin-left: 8px;
}
.pr-hscroll .arrow-r {
  margin-left: 11px;
}
.pr-hscroll .corner {
  position: absolute;
  right: 0;
  top: 0;
  width: 21px;
  height: 18px;
  background: #dcdcdc;
}
```
